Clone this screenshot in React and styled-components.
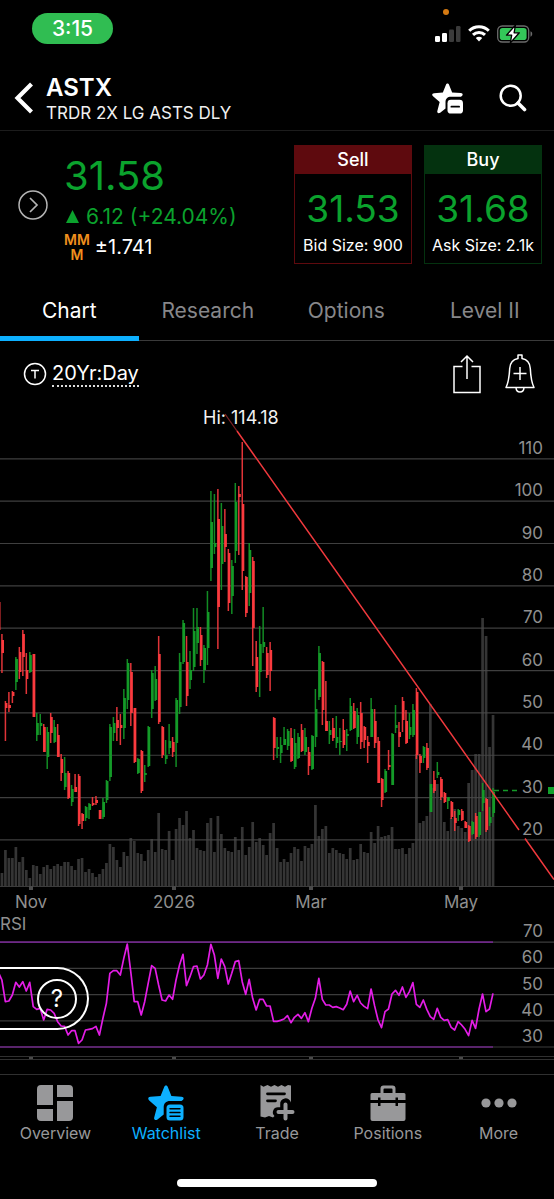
import React, { useState } from 'react'
import styled, { createGlobalStyle } from 'styled-components';

const STEP = 3.483;
const START = -1.6;
const BASELINE = 886;

// wick top, wick bottom, body top, body bottom, direction
const candles = [
    [602,630,602,630,'r'],[634,673,640,653,'r'],[701,741,703,708,'r'],[692,712,705,708,'r'],[691,703,692,696,'r'],
    [657,690,659,682,'g'],[647,679,652,672,'r'],[630,676,634,657,'r'],[653,694,670,679,'r'],[652,673,655,672,'g'],
    [654,717,654,717,'r'],[713,741,723,735,'g'],[714,735,723,726,'g'],[724,752,727,752,'r'],[727,769,732,757,'g'],
    [713,743,717,733,'r'],[720,743,727,742,'g'],[724,757,735,757,'r'],[754,781,759,773,'r'],[757,790,773,787,'g'],
    [771,799,773,798,'r'],[785,806,789,802,'g'],[774,792,787,792,'r'],[774,826,776,824,'r'],[813,829,814,821,'r'],
    [806,821,807,818,'g'],[803,819,804,810,'g'],[797,806,803,805,'r'],[796,805,800,803,'r'],[810,819,810,819,'r'],
    [798,819,802,817,'g'],[780,803,781,800,'g'],[724,781,727,777,'g'],[717,741,723,733,'g'],[707,741,720,728,'r'],
    [714,745,725,728,'r'],[689,739,698,728,'g'],[659,709,663,700,'g'],[663,726,672,713,'r'],[708,763,708,762,'r'],
    [758,774,759,773,'g'],[750,793,751,791,'r'],[765,782,773,775,'g'],[726,767,727,766,'g'],[670,718,673,709,'g'],
    [666,701,679,700,'g'],[636,724,654,722,'r'],[726,758,727,755,'r'],[740,764,755,759,'g'],[724,754,741,748,'g'],
    [737,757,742,752,'r'],[698,767,700,743,'g'],[653,714,662,707,'g'],[620,664,623,662,'g'],[636,706,662,696,'r'],
    [651,689,670,680,'g'],[608,671,631,667,'g'],[608,654,627,643,'g'],[627,666,635,660,'r'],[645,683,648,670,'g'],
    [591,665,612,648,'g'],[491,581,522,568,'g'],[494,554,543,547,'g'],[489,649,519,607,'r'],[503,590,526,564,'g'],
    [509,562,534,547,'r'],[549,611,553,603,'r'],[560,614,566,596,'g'],[483,563,502,551,'g'],[486,555,494,497,'r'],
    [442,590,504,571,'r'],[576,617,577,613,'r'],[543,606,550,593,'g'],[557,666,561,628,'r'],[641,692,657,687,'r'],
    [626,697,644,672,'g'],[607,653,642,647,'g'],[647,678,653,675,'r'],[642,691,650,671,'r'],[717,760,718,748,'r'],
    [737,758,747,749,'g'],[737,763,745,753,'g'],[727,745,739,745,'g'],[729,750,731,746,'g'],[728,762,738,761,'r'],
    [729,769,743,767,'g'],[733,759,737,758,'g'],[724,752,730,751,'r'],[728,755,737,752,'g'],[747,775,752,766,'r'],
    [735,770,736,769,'g'],[689,747,709,737,'g'],[646,700,653,697,'g'],[661,725,662,710,'r'],[681,731,721,731,'r'],
    [721,744,730,735,'g'],[718,741,728,738,'r'],[716,748,737,743,'g'],[728,755,741,742,'g'],[719,748,730,745,'r'],
    [729,751,734,736,'g'],[698,731,706,730,'g'],[703,729,711,728,'r'],[708,744,715,737,'g'],[702,749,713,742,'r'],
    [726,748,727,740,'r'],[736,763,742,746,'r'],[698,737,709,737,'g'],[709,748,721,743,'r'],[737,783,741,783,'r'],
    [778,807,779,800,'r'],[769,793,771,792,'g'],[750,770,765,767,'r'],[733,785,734,785,'g'],[705,733,725,728,'g'],
    [722,747,732,737,'r'],[697,732,701,720,'r'],[710,744,721,743,'r'],[713,739,727,735,'g'],[704,737,710,735,'g'],
    [688,759,692,755,'r'],[754,773,756,763,'r'],[746,763,747,758,'g'],[743,770,748,768,'r'],[784,812,784,812,'g'],
    [771,793,780,791,'r'],[762,778,772,775,'g'],[777,800,779,797,'r'],[792,803,793,802,'r'],[797,809,797,801,'g'],
    [801,819,802,817,'r'],[811,831,818,823,'r'],[809,821,810,815,'g'],[809,821,811,820,'r'],[821,828,822,828,'r'],
    [825,842,826,841,'r'],[821,835,822,834,'g'],[813,839,816,837,'r'],[812,837,812,835,'g'],[783,811,790,803,'g'],
    [798,832,799,830,'r'],[807,826,817,823,'g'],[788,817,792,813,'g'],
];

const volumes = [
    12,13,36,28,28,39,24,29,16,8,21,20,12,19,21,17,20,22,20,24,
    24,20,16,27,28,14,17,13,9,12,17,23,42,39,26,19,34,30,48,45,
    33,32,25,36,47,34,73,37,36,55,26,57,68,61,75,48,56,38,36,35,
    63,68,34,70,52,38,35,34,49,36,59,31,39,64,44,48,41,31,53,63,
    38,24,27,24,33,39,37,25,40,38,42,81,50,57,60,33,38,36,33,32,
    27,38,26,27,42,34,33,54,43,60,49,50,51,59,37,37,38,32,38,43,
    132,63,65,70,182,98,102,87,64,55,68,77,60,58,54,103,116,132,132,268,
    250,139,171,
];

// thirds of a unit below the top of the RSI pane
const rsi = [
    262,285,350,348,330,292,306,290,318,292,365,373,370,405,373,375,385,410,423,424,
    450,437,437,475,465,435,433,431,424,450,400,355,265,257,257,270,220,177,260,350,
    350,390,350,295,242,250,300,345,348,330,343,285,240,208,302,275,245,243,282,270,
    240,178,210,280,222,245,297,265,230,227,290,328,283,340,375,343,343,363,363,409,
    409,406,402,392,413,397,388,400,383,410,370,340,280,343,360,360,367,365,369,374,
    358,318,350,331,354,364,371,312,362,405,428,380,372,327,316,331,306,337,320,293,
    358,367,345,373,395,403,370,397,406,404,427,435,410,420,433,452,406,430,372,327,
    380,372,325,
];

const priceLevels = [110, 100, 90, 80, 70, 60, 50, 40, 30, 20];
const rsiLevels = [70, 60, 50, 40, 30];
const months = [
    { label: 'Nov', x: 31 },
    { label: '2026', x: 174 },
    { label: 'Mar', x: 311 },
    { label: 'May', x: 461 },
];

const barX = (i) => START + i * STEP;
const priceY = (p) => 458.8 + (110 - p) * 4.235;
const rsiY = (v) => 942.2 + (70 - v) * 2.62;

function PriceChart() {
    return (
        <ChartSvg viewBox="0 400 554 664" role="img" aria-label="ASTX daily price chart with RSI">
            {volumes.map((h, i) => (
                <rect key={i} x={barX(i) - 1.3} y={BASELINE - h} width="2.7" height={h} fill="#353535" />
            ))}
            {priceLevels.map((p) => (
                <line key={p} x1="0" x2="554" y1={priceY(p)} y2={priceY(p)} stroke="#4a4a4a" strokeOpacity="0.85" strokeWidth="1.2" />
            ))}
            <line x1="0" x2="554" y1="886.5" y2="886.5" stroke="#3c3c3c" />
            {months.map((m) => (
                <g key={m.label}>
                    <rect x={m.x - 2} y="886" width="4" height="4" fill="#4a4a4a" />
                    <AxisText x={m.x} y="908" textAnchor="middle">{m.label}</AxisText>
                    <rect x={m.x - 2} y="1056" width="4" height="4" fill="#4a4a4a" />
                </g>
            ))}
            {candles.map(([high, low, top, bottom, dir], i) => (
                <g key={i} fill={dir === 'g' ? '#149a28' : '#fa3a3e'}>
                    <rect x={barX(i) - 0.7} y={high} width="1.5" height={low - high} fillOpacity="0.9" />
                    <rect x={barX(i) - 0.3} y={top} width="2.4" height={bottom - top} />
                </g>
            ))}
            <line x1="494" x2="519" y1="790.5" y2="790.5" stroke="#149a28" strokeWidth="1.4" strokeDasharray="5 4" />
            <rect x="548" y="787" width="6" height="7" fill="#12a12b" />
            <HighText x="203" y="424">Hi: 114.18</HighText>
            <line x1="225" y1="414" x2="237" y2="431" stroke="#7c2226" strokeWidth="1.3" />
            <path d="M237 431L519 830M525 838.500L554 879.500" stroke="#f0393d" strokeWidth="1.5" fill="none" />
            {priceLevels.map((p) => (
                <AxisText key={p} x="543" y={priceY(p) - 5} textAnchor="end">{p}</AxisText>
            ))}

            <AxisText x="0" y="930">RSI</AxisText>
            {rsiLevels.map((v) => (
                <g key={v}>
                    <line x1="0" x2="554" y1={rsiY(v)} y2={rsiY(v)} stroke="#3c3c3c" strokeWidth="1.2" />
                    <AxisText x="543" y={rsiY(v) - 5} textAnchor="end">{v}</AxisText>
                </g>
            ))}
            <path d="M0 942.200H493M0 1047H493" stroke="#6d2787" strokeWidth="1.7" />
            <polyline
                points={rsi.map((v, i) => `${barX(i)},${885 + v / 3}`).join(' ')}
                fill="none" stroke="#e31de6" strokeWidth="1.7" strokeLinejoin="round"
            />
            <path d="M0 1056.500H554M0 1059.500H554" stroke="#303030" />
        </ChartSvg>
    )
}

function StarIcon({ size, list }) {
    return (
        <svg width={size} height={size} viewBox="0 0 36 36" fill="currentColor" aria-hidden="true">
            <path d="M18 .5c1 0 1.500.700 1.900 1.700l3.500 8.800 10.100.700c2.300.200 2.700 2 1.300 3.300L33.500 16H22c-4 0-6.300 2.300-6.300 6.300V29.500l-6.200 5c-2 1.300-3.900.200-3.300-2.100l2.700-10.200L1.200 15.500c-1.600-1.500-1.200-3.500 1.200-3.700l10.200-.8 3.500-8.800C16.500 1.200 17 .5 18 .5z" />
            {list ? (
                <>
                    <rect x="18.500" y="19.500" width="17" height="16" rx="3.500" />
                    <path d="M22 23.800h10M22 27.500h10M22 31.200h10" stroke="#000" strokeWidth="1.400" strokeLinecap="round" />
                </>
            ) : (
                <>
                    <rect x="18" y="19.500" width="18" height="16" rx="4" />
                    <path d="M22.500 27.500h9" stroke="#000" strokeWidth="2" strokeLinecap="round" />
                </>
            )}
        </svg>
    )
}

const navItems = [
    {
        label: 'Overview',
        icon: (
            <svg width="36" height="36" viewBox="0 0 36 36" fill="currentColor" aria-hidden="true">
                <path d="M4 0h12v20H0V4a4 4 0 0 1 4-4zM20 0h12a4 4 0 0 1 4 4v8H20zM0 24h16v12H4a4 4 0 0 1-4-4zM20 16h16v16a4 4 0 0 1-4 4H20z" />
            </svg>
        ),
    },
    { label: 'Watchlist', icon: <StarIcon size="36" list /> },
    {
        label: 'Trade',
        icon: (
            <svg width="36" height="36" viewBox="0 0 36 36" aria-hidden="true">
                <path fill="currentColor" d="M1.500 0l3 1.800L8.500 0 12 1.800 15.500 0 19 1.800 22.500 0 26 1.800 29 0 32 .5V17.500a5.500 5.500 0 0 0-10.800 2v2.800H19a5 5 0 0 0-3.500 8.700L14 32.500 10 31 6 32.500 1.500 31.500z" />
                <path d="M8.500 8.800h17M8.500 15.800h8" stroke="#000" strokeWidth="2.800" strokeLinecap="round" />
                <path d="M26.500 19.500v14M19.500 27h14" stroke="currentColor" strokeWidth="4" strokeLinecap="round" />
            </svg>
        ),
    },
    {
        label: 'Positions',
        icon: (
            <svg width="36" height="36" viewBox="0 0 36 36" fill="currentColor" aria-hidden="true">
                <path d="M10.500 8V3.500a3 3 0 0 1 3-3h9a3 3 0 0 1 3 3V8H34a1.500 1.500 0 0 1 1.500 1.500V15H28v-2.500h-2.500V15h-15v-2.500H8V15H.5V9.500A1.500 1.500 0 0 1 2 8zm3 0h9V4.500a1 1 0 0 0-1-1h-7a1 1 0 0 0-1 1z" />
                <path d="M.5 18H8v3h2.500v-3h15v3H28v-3h7.500v16a2 2 0 0 1-2 2h-31a2 2 0 0 1-2-2z" />
            </svg>
        ),
    },
    {
        label: 'More',
        icon: (
            <svg width="36" height="36" viewBox="0 0 36 36" fill="currentColor" aria-hidden="true">
                <circle cx="5" cy="18" r="4.600" />
                <circle cx="18" cy="18" r="4.600" />
                <circle cx="31" cy="18" r="4.600" />
            </svg>
        ),
    },
];

const tabs = ['Chart', 'Research', 'Options', 'Level II'];

function App() {
    const [tab, setTab] = useState('Chart');
    const [nav, setNav] = useState('Watchlist');
    return (
        <Page>
            <GlobalStyle />
            <StatusBar>
                <Clock>3:15</Clock>
                <StatusIcons>
                    <MicDot />
                    <svg width="26" height="16" viewBox="0 0 26 16" aria-hidden="true">
                        <rect x="0" y="10" width="5" height="6" rx="1.300" fill="#fff" />
                        <rect x="7" y="7" width="5" height="9" rx="1.300" fill="#fff" />
                        <rect x="14" y="3.500" width="5" height="12.500" rx="1.300" fill="#3b3b3b" />
                        <rect x="21" y="0" width="4.500" height="16" rx="1.300" fill="#3b3b3b" />
                    </svg>
                    <svg width="22" height="17" viewBox="0 0 22 17" aria-hidden="true">
                        <g fill="none" stroke="#fff" strokeWidth="3">
                            <path d="M1.200 5.800a14 14 0 0 1 19.600 0" />
                            <path d="M5 9.900a8.600 8.600 0 0 1 12 0" />
                        </g>
                        <path d="M11 16.500l-3.200-3.400a4.600 4.600 0 0 1 6.400 0z" fill="#fff" />
                    </svg>
                    <svg width="36" height="18" viewBox="0 0 36 18" aria-hidden="true">
                        <rect x="0.700" y="1" width="31" height="16" rx="4.500" fill="none" stroke="#6b6b6b" strokeWidth="1.300" />
                        <rect x="2.800" y="3" width="26.800" height="12" rx="2.800" fill="#34c759" />
                        <path d="M33.500 6.300c2.300.800 2.300 4.600 0 5.400z" fill="#6b6b6b" />
                        <path d="M18.500 0L9.500 10.200h5.200L13.300 18 22.300 7.800h-5.200z" fill="#fff" stroke="#000" strokeWidth="1.300" strokeLinejoin="round" />
                    </svg>
                </StatusIcons>
            </StatusBar>

            <Header>
                <IconButton aria-label="Back">
                    <svg width="20" height="32" viewBox="0 0 20 32" fill="none" stroke="#fff" strokeWidth="4.200" aria-hidden="true">
                        <path d="M17.500 2L3.500 16l14 14" />
                    </svg>
                </IconButton>
                <Titles>
                    <Symbol>ASTX</Symbol>
                    <Company>TRDR 2X LG ASTS DLY</Company>
                </Titles>
                <HeaderActions>
                    <IconButton aria-label="Remove from watchlist"><StarIcon size="31" /></IconButton>
                    <IconButton aria-label="Search">
                        <svg width="28" height="28" viewBox="0 0 28 28" fill="none" stroke="#fff" aria-hidden="true">
                            <circle cx="11.700" cy="11.700" r="10" strokeWidth="2.500" />
                            <path d="M19 19l6.500 6.500" strokeWidth="3.600" strokeLinecap="round" />
                        </svg>
                    </IconButton>
                </HeaderActions>
            </Header>

            <Quote>
                <IconButton aria-label="Expand quote">
                    <svg width="30" height="30" viewBox="0 0 30 30" fill="none" stroke="#b4b4b4" aria-hidden="true">
                        <circle cx="15" cy="15" r="14" strokeWidth="1.500" />
                        <path d="M12 8l7 7-7 7" strokeWidth="1.700" />
                    </svg>
                </IconButton>
                <QuoteInfo>
                    <LastPrice>31.58</LastPrice>
                    <Change>
                        <svg width="13" height="13" viewBox="0 0 13 13" fill="currentColor" aria-hidden="true"><path d="M6.500 0L13 13H0z" /></svg>
                        6.12 (+24.04%)
                    </Change>
                    <MoveRow>
                        <MoveMark><span>MM</span><span>M</span></MoveMark>
                        ±1.741
                    </MoveRow>
                </QuoteInfo>
                <OrderButtons>
                    <OrderButton $color="#5e0a0e">
                        <OrderSide $color="#5e0a0e">Sell</OrderSide>
                        <OrderPrice>31.53</OrderPrice>
                        <OrderSize>Bid Size: 900</OrderSize>
                    </OrderButton>
                    <OrderButton $color="#04320f">
                        <OrderSide $color="#04320f">Buy</OrderSide>
                        <OrderPrice>31.68</OrderPrice>
                        <OrderSize>Ask Size: 2.1k</OrderSize>
                    </OrderButton>
                </OrderButtons>
            </Quote>

            <Tabs>
                {tabs.map((t) => (
                    <Tab key={t} $active={t === tab} onClick={() => setTab(t)}>{t}</Tab>
                ))}
            </Tabs>

            <ChartBar>
                <Timeframe>
                    <svg width="24" height="24" viewBox="0 0 24 24" fill="none" stroke="#fff" strokeWidth="1.500" aria-hidden="true">
                        <circle cx="12" cy="12" r="10.500" />
                        <path d="M8 8.500h8M12 8.500v8" />
                    </svg>
                    <span>20Yr:Day</span>
                </Timeframe>
                <ChartActions>
                    <IconButton aria-label="Share">
                        <svg width="28" height="40" viewBox="0 0 28 40" fill="none" stroke="#fff" strokeWidth="1.500" aria-hidden="true">
                            <path d="M9.500 12.500H1v26h26v-26h-8.500M14 25V2M8 8l6-6 6 6" />
                        </svg>
                    </IconButton>
                    <IconButton aria-label="Add alert">
                        <svg width="30" height="40" viewBox="0 0 30 40" fill="none" stroke="#fff" strokeWidth="1.500" strokeLinejoin="round" aria-hidden="true">
                            <path d="M13 4.500V1h4v3.500c5.500 1 8 5 8.300 10 .400 8 .700 13 3.700 19H1c3-6 3.300-11 3.700-19C5 9.500 7.500 5.500 13 4.500zM11 33.500c.300 6 7.700 6 8 0M15 13v13M8.500 19.500h13" />
                        </svg>
                    </IconButton>
                </ChartActions>
            </ChartBar>

            <ChartArea>
                <PriceChart />
                <HelpButton aria-label="Help"><span>?</span></HelpButton>
            </ChartArea>

            <BottomNav>
                {navItems.map((item) => (
                    <NavButton key={item.label} $active={item.label === nav} onClick={() => setNav(item.label)}>
                        {item.icon}
                        {item.label}
                    </NavButton>
                ))}
            </BottomNav>
            <HomeIndicator />
        </Page>
    )
}

const GlobalStyle = createGlobalStyle`
    *{
        box-sizing:border-box;
    }
    body{
        margin:0;
        background:#000;
        color:#fff;
        font-family:Inter, "Liberation Sans", sans-serif;
    }
    button{
        margin:0;
        padding:0;
        border:0;
        background:none;
        color:inherit;
        font-family:inherit;
        cursor:pointer;
    }
    svg{
        display:block;
        flex-shrink:0;
    }
`
const Page = styled.div`
    width:100%;
    min-height:100vh;
    display:flex;
    flex-direction:column;
    background:#000;
`
const StatusBar = styled.div`
    display:flex;
    justify-content:space-between;
    align-items:center;
    padding:13px 21px 0 32px;
`
const Clock = styled.div`
    width:81px;
    line-height:31px;
    border-radius:16px;
    background:#30bd52;
    text-align:center;
    font-size:21px;
    font-weight:500;
`
const StatusIcons = styled.div`
    position:relative;
    display:flex;
    align-items:center;
    gap:7px;
    padding-top:10px;
`
const MicDot = styled.span`
    position:absolute;
    top:-6px;
    left:8px;
    width:6px;
    height:6px;
    border-radius:50%;
    background:#d57a12;
`
const IconButton = styled.button`
    display:flex;
    align-items:center;
    justify-content:center;
    flex-shrink:0;
`
const Header = styled.header`
    display:flex;
    align-items:center;
    gap:12px;
    padding:27px 27px 5px 14px;
    border-bottom:1px solid #1c1c1c;
`
const Titles = styled.div`
    flex:1;
    padding-top:3px;
`
const Symbol = styled.h1`
    margin:0;
    font-size:24px;
    line-height:28px;
    font-weight:600;
`
const Company = styled.div`
    font-size:17px;
    line-height:23px;
    color:#f0f0f0;
`
const HeaderActions = styled.div`
    display:flex;
    align-items:center;
    gap:36px;
`
const Quote = styled.section`
    display:flex;
    align-items:center;
    padding:14px 12px 16px 18px;
`
const QuoteInfo = styled.div`
    flex:1;
    padding:2px 0 0 16px;
`
const LastPrice = styled.div`
    color:#0ba22d;
    font-size:40px;
    line-height:52px;
`
const Change = styled.div`
    display:flex;
    align-items:center;
    gap:7px;
    padding-left:2px;
    color:#0ba22d;
    font-size:21px;
    line-height:30px;
`
const MoveRow = styled.div`
    display:flex;
    align-items:center;
    gap:5px;
    font-size:20px;
    line-height:30px;
`
const MoveMark = styled.span`
    display:flex;
    flex-direction:column;
    align-items:center;
    color:#f0901e;
    font-size:14px;
    line-height:15px;
    font-weight:600;
`
const OrderButtons = styled.div`
    display:flex;
    gap:12px;
`
const OrderButton = styled.button`
    display:flex;
    flex-direction:column;
    align-items:center;
    width:118px;
    padding-bottom:4px;
    border:1px solid ${(props) => props.$color};
`
const OrderSide = styled.span`
    width:100%;
    background:${(props) => props.$color};
    font-size:18px;
    line-height:28px;
    font-weight:500;
`
const OrderPrice = styled.span`
    padding-top:13px;
    color:#0ba22d;
    font-size:37px;
    line-height:44px;
`
const OrderSize = styled.span`
    font-size:16px;
    line-height:28px;
    white-space:nowrap;
`
const Tabs = styled.nav`
    display:grid;
    grid-template-columns:repeat(4, 1fr);
    box-shadow:inset 0 -1px #3a3a3a;
`
const Tab = styled.button`
    height:61px;
    padding-top:4px;
    border-bottom:5px solid ${(props) => (props.$active ? '#0db0ff' : 'transparent')};
    color:${(props) => (props.$active ? '#fff' : '#87878a')};
    font-size:21px;
`
const ChartBar = styled.div`
    display:flex;
    justify-content:space-between;
    align-items:center;
    padding:13px 19px 6px 23px;
`
const Timeframe = styled.button`
    display:flex;
    align-items:center;
    gap:5px;
    font-size:20px;
    line-height:24px;
    span{
        border-bottom:2px dotted #ddd;
    }
`
const ChartActions = styled.div`
    display:flex;
    gap:24px;
`
const ChartArea = styled.div`
    position:relative;
`
const ChartSvg = styled.svg`
    width:100%;
    height:auto;
`
const AxisText = styled.text`
    fill:#8f8f8f;
    font-size:17px;
`
const HighText = styled.text`
    fill:#f2f2f2;
    font-size:18px;
`
const HelpButton = styled.button`
    position:absolute;
    left:0;
    bottom:34px;
    width:89px;
    height:63px;
    display:flex;
    align-items:center;
    justify-content:flex-end;
    padding-right:10px;
    border:2px solid #fff;
    border-left:0;
    border-radius:0 32px 32px 0;
    span{
        width:40px;
        height:40px;
        border:2px solid #fff;
        border-radius:50%;
        font-size:24px;
        line-height:36px;
    }
`
const BottomNav = styled.nav`
    display:grid;
    grid-template-columns:repeat(5, 1fr);
    margin-top:10px;
    padding-top:10px;
    border-top:1px solid #303030;
`
const NavButton = styled.button`
    display:flex;
    flex-direction:column;
    align-items:center;
    gap:2px;
    color:${(props) => (props.$active ? '#0db0ff' : '#98989a')};
    font-size:16px;
    line-height:20px;
`
const HomeIndicator = styled.div`
    width:36%;
    height:8px;
    margin:36px auto 12px;
    border-radius:4px;
    background:#fff;
`
export default App
